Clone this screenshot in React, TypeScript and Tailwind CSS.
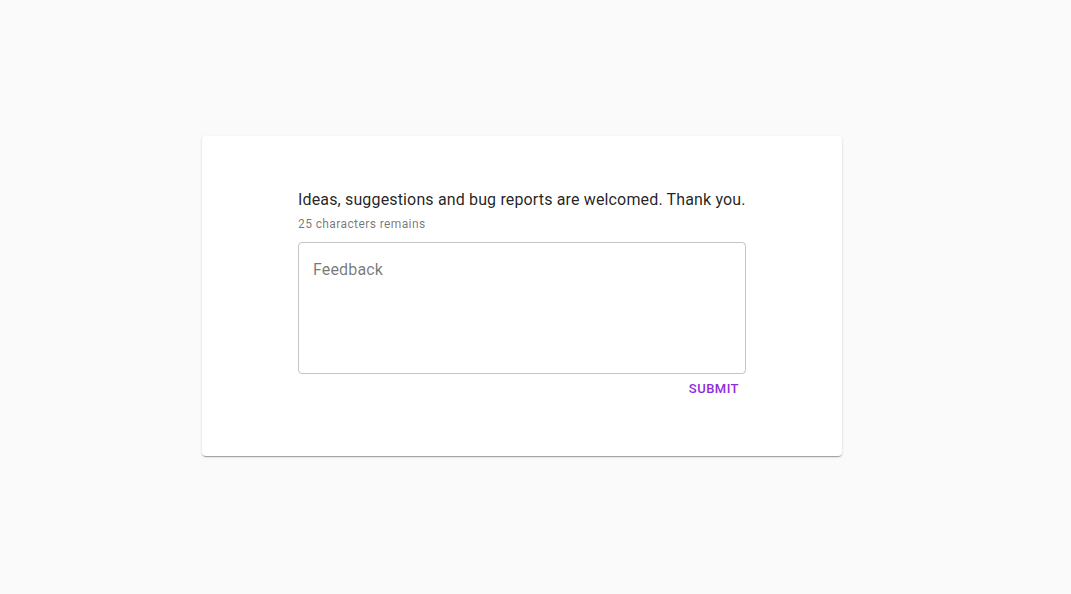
export default function App() {
  return (
    <div className="flex h-[594px] w-full items-start bg-[#fafafa] pl-[202px] pt-[136px] font-['Roboto',sans-serif]">
      <div className="h-[320px] w-[640px] rounded-[4px] bg-white px-[96px] pt-[52px] shadow-[0px_2px_1px_-1px_rgba(0,0,0,0.2),0px_1px_1px_0px_rgba(0,0,0,0.14),0px_1px_3px_0px_rgba(0,0,0,0.12)]">
        <p className="text-[16px] leading-[24px] tracking-[0.15px] text-[rgba(0,0,0,0.87)]">
          Ideas, suggestions and bug reports are welcomed. Thank you.
        </p>
        <p className="mt-[2px] text-[12px] leading-[20px] tracking-[0.4px] text-[rgba(0,0,0,0.54)]">
          25 characters remains
        </p>
        <textarea
          placeholder="Feedback"
          className="mt-[8px] block h-[132px] w-full resize-none rounded-[4px] border border-[rgba(0,0,0,0.23)] px-[14px] pt-[15px] text-[16px] leading-[23px] tracking-[0.15px] text-[rgba(0,0,0,0.87)] outline-none placeholder:text-[rgba(0,0,0,0.54)]"
        />
        <div className="flex justify-end">
          <button className="mr-[-1px] mt-[1px] h-7 px-2 text-[13px] font-medium uppercase tracking-[0.46px] text-[#8e2ddb]">
            Submit
          </button>
        </div>
      </div>
    </div>
  );
}
